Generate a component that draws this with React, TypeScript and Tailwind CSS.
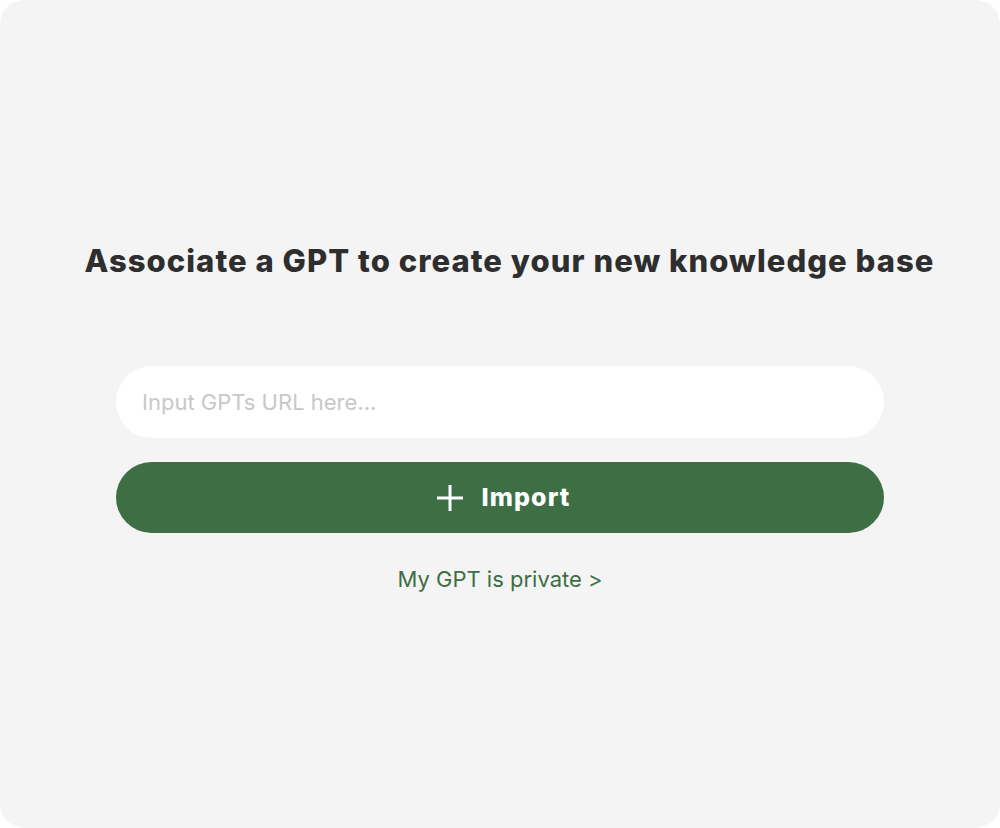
import React from "react";

export default function App() {
  return (
    <div className="w-[1000px] h-[828px] bg-white">
      <div className="w-full h-full bg-[#f4f4f4] rounded-[24px] flex flex-col items-center pt-[240px]" style={{ fontFamily: "Inter, 'Noto Sans', sans-serif" }}>
        <h1 className="ml-[19px] text-[31px] leading-[42px] font-extrabold text-[#2e2e2e] tracking-[1.05px]">
          Associate a GPT to create your new knowledge base
        </h1>
        <div className="mt-[84px] w-[768px] flex flex-col items-center">
          <input
            className="w-full h-[72px] rounded-full bg-white px-[26px] text-[22px] text-[#333] placeholder:text-[#c8c8c8] outline-none"
            placeholder="Input GPTs URL here..."
          />
          <button className="mt-[24px] w-full h-[71px] rounded-full bg-[#3d6e44] flex items-center justify-center gap-[18px] pl-[6px] text-white">
            <svg width="28" height="28" viewBox="0 0 28 28" fill="none" stroke="white" strokeWidth="3" strokeLinecap="butt">
              <path d="M14 1v26M1 14h26" />
            </svg>
            <span className="text-[25px] font-extrabold tracking-[1.1px]">Import</span>
          </button>
          <a className="mt-[30px] text-[22px] text-[#3d6e44] leading-[32px]">My GPT is private &gt;</a>
        </div>
      </div>
    </div>
  );
}
